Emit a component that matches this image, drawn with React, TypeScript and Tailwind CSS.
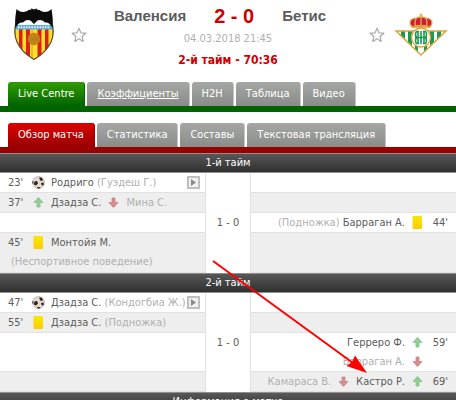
import { Fragment } from 'react';
import type { ReactNode } from 'react';
import clsx from 'clsx';

type IconKind = 'goal' | 'in' | 'out' | 'yellow';

interface MatchEvent {
  time?: string;
  icon: IconKind;
  player: string;
  note?: string;       // assist or reason, in brackets
  noteBelow?: boolean; // long reasons go on their own line
  off?: string;        // player going off
  offBelow?: boolean;
  video?: boolean;
}

interface Row {
  home?: MatchEvent;
  away?: MatchEvent;
}

interface Period {
  title: string;
  score: string;
  rows: Row[];
}

const MAIN_TABS = ['Live Centre', 'Коэффициенты', 'H2H', 'Таблица', 'Видео'];
const SUB_TABS = ['Обзор матча', 'Статистика', 'Составы', 'Текстовая трансляция'];

const PERIODS: Period[] = [
  {
    title: '1-й тайм',
    score: '1 - 0',
    rows: [
      { home: { time: "23'", icon: 'goal', player: 'Родриго', note: '(Гуэдеш Г.)', video: true } },
      { home: { time: "37'", icon: 'in', player: 'Дзадза С.', off: 'Мина С.' } },
      { away: { time: "44'", icon: 'yellow', player: 'Барраган А.', note: '(Подножка)' } },
      { home: { time: "45'", icon: 'yellow', player: 'Монтойя М.', note: '(Неспортивное поведение)', noteBelow: true } },
    ],
  },
  {
    title: '2-й тайм',
    score: '1 - 0',
    rows: [
      { home: { time: "47'", icon: 'goal', player: 'Дзадза С.', note: '(Кондогбиа Ж.)', video: true } },
      { home: { time: "55'", icon: 'yellow', player: 'Дзадза С.', note: '(Подножка)' } },
      { away: { time: "59'", icon: 'in', player: 'Герреро Ф.', off: 'Барраган А.', offBelow: true } },
      { away: { time: "69'", icon: 'in', player: 'Кастро Р.', off: 'Камараса В.' } },
    ],
  },
];

function Star() {
  return (
    <svg viewBox="0 0 16 16" className="size-4" fill="#fff" stroke="#aaa" strokeWidth="1.2" strokeLinejoin="round">
      <path d="M8 1.2 L9.9 5.8 L14.8 6.2 L11.1 9.5 L12.2 14.4 L8 11.8 L3.8 14.4 L4.9 9.5 L1.2 6.2 L6.1 5.8 Z" />
    </svg>
  );
}

function ValenciaCrest() {
  return (
    <svg viewBox="0 0 40 53" className="h-[53px] w-10" role="img" aria-label="Валенсия">
      <defs>
        <clipPath id="shield">
          <path d="M3 12 C0 20 0 27 3 34 C7 43 14 48 20 51.500 C26 48 33 43 37 34 C40 27 40 20 37 12 Z" />
        </clipPath>
      </defs>
      <g clipPath="url(#shield)">
        <rect width="40" height="53" fill="#fff" />
        <rect y="21" width="40" height="32" fill="#ffdf2b" />
        <path d="M5 21h3.500v32H5z M12 21h4v32h-4z M23.500 21h4v32h-4z M31 21h3.500v32H31z" fill="#dc2016" />
        <path d="M0 21h1.500v32H0z M38.500 21H40v32h-1.500z M17.500 21h1v32h-1z" fill="#f08a1c" />
        <rect y="17" width="40" height="4.500" fill="#5aaee0" />
        <path d="M4 19.300h32" stroke="#e2f2fa" strokeWidth="2" strokeDasharray="1.500 1.200" />
      </g>
      <path d="M3 12 C0 20 0 27 3 34 C7 43 14 48 20 51.500 C26 48 33 43 37 34 C40 27 40 20 37 12" fill="none" stroke="#5a4c30" strokeWidth="1.200" />
      <circle cx="20" cy="31" r="6" fill="#c08619" stroke="#b87c16" strokeWidth=".6" />
      <path d="M15 29l10 4 M15 33l10-4 M20 25v12" stroke="#b07a14" strokeWidth=".6" />
      <path d="M2.500 1 C5 4 9 4.500 12 3.500 C14 2 15.500 1.700 17 1.700 L17.500 .3 L19 1.200 H21 L22.500 .3 L23 1.700 C25 1.700 26 2 28 3.500 C31 4.500 35 4 37.500 1 C38 5 39.500 11 38.500 20 C36 15.500 34 14 31 14.500 C28.500 11.500 25.500 11.500 23.500 12.500 L20 16 L16.500 12.500 C14.500 11.500 11.500 11.500 9 14.500 C6 14 4 15.500 1.500 20 C.5 11 2 5 2.500 1 Z" fill="#0b0b0b" />
    </svg>
  );
}

function BetisCrest() {
  return (
    <svg viewBox="0 0 54 44" className="h-11 w-[54px]" role="img" aria-label="Бетис">
      <defs>
        <clipPath id="triangle">
          <path d="M2 18 H52 L27 42 Z" />
        </clipPath>
      </defs>
      <g clipPath="url(#triangle)">
        <rect width="54" height="44" fill="#fff" />
        <path d="M7 17h4v27H7z M14 17h4v27h-4z M21 17h3v27h-3z M30 17h3v27h-3z M36 17h4v27h-4z M43 17h4v27h-4z" fill="#159a55" />
      </g>
      <path d="M2 18 H52 L27 42 Z" fill="none" stroke="#e0a33a" strokeWidth="1.500" />
      <circle cx="27" cy="24.500" r="9.500" fill="#fff" stroke="#e0a33a" strokeWidth="1.400" />
      <g fill="none" stroke="#159a55" strokeWidth="1.600">
        <path d="M27 18 V31 M21 24.500 H33 M25 18.500 H22.500 Q20.500 21 22.500 24.500 Q20.500 28 22.500 30.500 H25 M29 18.500 H31.500 Q33.500 21 31.500 24.500 Q33.500 28 31.500 30.500 H29 M24 18.500V30.500 M30 18.500V30.500" />
      </g>
      <path d="M18 14 C14 9 17 5 22 5.500 C24 3.500 30 3.500 32 5.500 C37 5 40 9 36 14 Z" fill="#d01c3c" stroke="#e0a33a" strokeWidth="1.300" />
      <path d="M22 6 Q20 10 22 13 M27 4 V13 M32 6 Q34 10 32 13" fill="none" stroke="#edb64e" strokeWidth="1.200" />
      <path d="M18 14 Q27 11.500 36 14" fill="none" stroke="#e0a33a" strokeWidth="2" />
      <path d="M27 .5 V4 M25.500 2 H28.500" stroke="#e0a33a" strokeWidth="1.200" />
    </svg>
  );
}

function EventIcon({ kind }: { kind: IconKind }) {
  if (kind === 'goal') {
    return (
      <svg viewBox="0 0 13 13" className="size-[13px] shrink-0">
        <circle cx="6.500" cy="6.500" r="6" fill="#e4d8d0" stroke="#b5aaa3" strokeWidth=".7" />
        <path d="M2.500 5.500 L5 5 L6 7.500 L4 9.500 L2 8.500 Z M.4 5 L1.500 5.500 L1.500 7.500 L.7 8 Z M7 1.500 L10 1.800 L11 4.500 L8.500 4.800 Z M9 7 L11.500 6.500 L11.800 9 L9.800 9.500 Z M5 11.300 L7.500 11 L8.500 12.200 L5.500 12.400 Z" fill="#29211f" />
      </svg>
    );
  }
  if (kind === 'yellow') {
    return (
      <svg viewBox="0 0 13 13" className="size-[13px] shrink-0">
        <defs>
          <linearGradient id="card" x2="0" y2="1">
            <stop stopColor="#f5e800" />
            <stop offset="1" stopColor="#ffcb05" />
          </linearGradient>
        </defs>
        <rect x="1.500" width="9.500" height="13" rx="1" fill="url(#card)" />
      </svg>
    );
  }
  return (
    <svg viewBox="0 0 13 13" className={clsx('size-[13px] shrink-0', kind === 'out' && 'rotate-180')}>
      <path
        d="M6.500 1.500 L11 6.500 H8 V11 H5 V6.500 H2 Z"
        fill={kind === 'in' ? '#92cf92' : '#d58e8e'}
        stroke={kind === 'in' ? '#86bd8c' : '#c98585'}
        strokeWidth=".8"
        strokeLinejoin="round"
      />
    </svg>
  );
}

function Tabs({ items, tone }: { items: string[]; tone: 'green' | 'red' }) {
  return (
    <nav
      className={clsx(
        'flex gap-0.5 border-b-[6px] pl-2',
        tone === 'green' ? 'border-[#006400]' : 'border-[#9b0000]'
      )}
    >
      {items.map((label, i) => (
        <a
          key={label}
          href="#"
          className={clsx(
            'h-6 rounded-t-[3px] bg-linear-to-b px-2.5 leading-6 whitespace-nowrap text-white',
            i > 0 && 'border-r border-[#c4c6c4] from-[#a5a7a5] to-[#8a8c89]',
            i === 0 && 'border-r',
            i === 0 && tone === 'green' && 'border-[#006400] from-[#2f9e00] to-[#006400]',
            i === 0 && tone === 'red' && 'border-[#9b0000] from-[#dd0000] to-[#9b0000]',
            label === 'Коэффициенты' && 'underline'
          )}
        >
          {label}
        </a>
      ))}
    </nav>
  );
}

function SectionHead({ children }: { children: ReactNode }) {
  return (
    <tr>
      <th
        colSpan={3}
        className="h-5 border-y border-[#8f8f8b] bg-linear-to-b from-[#585858] to-[#303030] p-0 text-center font-normal text-white"
      >
        {children}
      </th>
    </tr>
  );
}

function HomeEvent({ ev }: { ev: MatchEvent }) {
  return (
    <>
      <div className="flex h-[19px] items-center gap-1.5 pr-[5px] pl-2 whitespace-nowrap">
        <span className="w-[18px] shrink-0">{ev.time}</span>
        <EventIcon kind={ev.icon} />
        <span className={clsx(ev.video && 'w-0 flex-1')}>
          {ev.player}
          {ev.note && !ev.noteBelow && <span className="text-[#b0b0b0]"> {ev.note}</span>}
        </span>
        {ev.off && (
          <>
            <EventIcon kind="out" />
            <span className="text-[#b0b0b0]">{ev.off}</span>
          </>
        )}
        {ev.video && (
          <button type="button" aria-label="Видео" className="-ml-1.5 grid size-[13px] shrink-0 place-items-center border-2 border-[#bebebe] bg-[#f0f0f0]">
            <svg viewBox="0 0 5 7" className="h-[7px] w-[5px]">
              <path d="M0 0 L5 3.500 L0 7 Z" fill="#8a8a8a" />
            </svg>
          </button>
        )}
      </div>
      {ev.noteBelow && <div className="h-5 pl-[11px] leading-5 whitespace-nowrap text-[#b0b0b0]">{ev.note}</div>}
    </>
  );
}

function AwayEvent({ ev }: { ev: MatchEvent }) {
  return (
    <>
      <div className="flex h-[19px] items-center justify-end gap-1.5 pr-2 whitespace-nowrap">
        {ev.off && !ev.offBelow && (
          <>
            <span className="text-[#b0b0b0]">{ev.off}</span>
            <EventIcon kind="out" />
          </>
        )}
        <span>
          {ev.note && <span className="text-[#b0b0b0]">{ev.note} </span>}
          {ev.player}
        </span>
        <EventIcon kind={ev.icon} />
        <span className="w-[18px] text-right">{ev.time}</span>
      </div>
      {ev.offBelow && (
        <div className="flex h-[19px] items-center justify-end gap-1.5 pr-8 whitespace-nowrap text-[#b0b0b0]">
          {ev.off}
          <EventIcon kind="out" />
        </div>
      )}
    </>
  );
}

export default function App() {
  return (
    <main className="h-screen overflow-hidden bg-white font-['DejaVu_Sans_Condensed','Noto_Sans',sans-serif] text-[11px] leading-4 text-[#5c5c5c]">
      <header className="flex h-[82px] items-start justify-between pr-2 pl-3.5">
        <div className="flex items-center gap-[17px] pt-2">
          <ValenciaCrest />
          <button type="button" aria-label="В избранное"><Star /></button>
        </div>
        <div className="flex flex-col items-center pt-1">
          <h1 className="flex h-6 items-center gap-7 pr-4 font-['Liberation_Sans',sans-serif] text-[15px] font-bold">
            <span>Валенсия</span>
            <span className="text-xl text-[#cc0000]">2 - 0</span>
            <span>Бетис</span>
          </h1>
          <div className="pt-[3px] text-[#b0b0b0]">04.03.2018 21:45</div>
          <div className="pt-[5px] text-xs font-bold text-[#cc0000]">2-й тайм - 70:36</div>
        </div>
        <div className="flex items-center gap-[9px] pt-[13px]">
          <button type="button" aria-label="В избранное"><Star /></button>
          <BetisCrest />
        </div>
      </header>

      <Tabs items={MAIN_TABS} tone="green" />
      <div className="pt-[11px]">
        <Tabs items={SUB_TABS} tone="red" />
      </div>

      <section className="relative">
        <table className="w-full table-fixed border-separate border-spacing-0">
          <colgroup>
            <col />
            <col className="w-[46px]" />
            <col />
          </colgroup>
          <tbody>
            {PERIODS.map(p => (
              <Fragment key={p.title}>
                <SectionHead>{p.title}</SectionHead>
                {p.rows.map((r, i) => {
                  const cell = clsx(
                    'h-5 border-b border-[#e2e2e2] p-0 align-top',
                    i % 2 ? 'bg-[#eeeeee]' : 'bg-white'
                  );
                  return (
                    <tr key={i}>
                      <td className={cell}>{r.home && <HomeEvent ev={r.home} />}</td>
                      {i === 0 && (
                        <td rowSpan={p.rows.length} className="border-x border-[#e2e2e2] p-0 text-center">
                          {p.score}
                        </td>
                      )}
                      <td className={cell}>{r.away && <AwayEvent ev={r.away} />}</td>
                    </tr>
                  );
                })}
              </Fragment>
            ))}
            <SectionHead>Информация о матче</SectionHead>
          </tbody>
        </table>

        {/* pointer to the last substitution */}
        <svg viewBox="0 0 160 120" className="absolute top-[105px] left-[calc(50%-20px)] h-[120px] w-40" aria-hidden="true">
          <path d="M5 3 L145 105" stroke="#f00" strokeWidth="2" />
          <path d="M159 115 L138.500 108 L144 104 L147 97.500 Z" fill="#f00" />
        </svg>
      </section>
    </main>
  );
}
